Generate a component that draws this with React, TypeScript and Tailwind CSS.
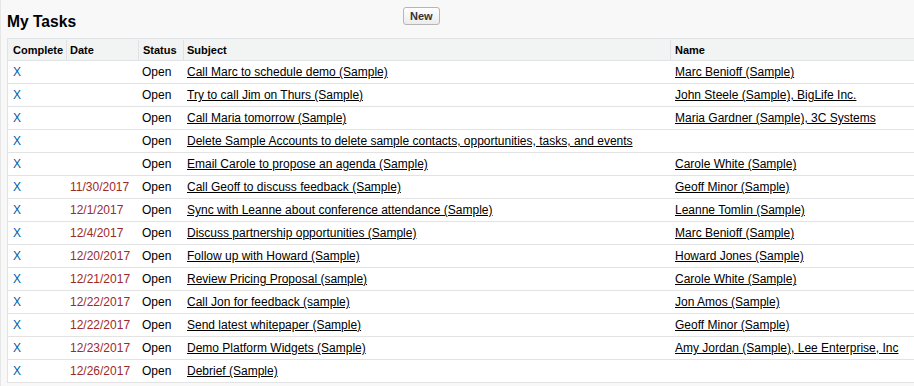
// My Tasks — classic list view of open tasks with due dates and related names.
type Task = { date: string; subject: string; name: string };

const tasks: Task[] = [
  { date: '', subject: 'Call Marc to schedule demo (Sample)', name: 'Marc Benioff (Sample)' },
  { date: '', subject: 'Try to call Jim on Thurs (Sample)', name: 'John Steele (Sample), BigLife Inc.' },
  { date: '', subject: 'Call Maria tomorrow (Sample)', name: 'Maria Gardner (Sample), 3C Systems' },
  {
    date: '',
    subject: 'Delete Sample Accounts to delete sample contacts, opportunities, tasks, and events',
    name: '',
  },
  { date: '', subject: 'Email Carole to propose an agenda (Sample)', name: 'Carole White (Sample)' },
  { date: '11/30/2017', subject: 'Call Geoff to discuss feedback (Sample)', name: 'Geoff Minor (Sample)' },
  {
    date: '12/1/2017',
    subject: 'Sync with Leanne about conference attendance (Sample)',
    name: 'Leanne Tomlin (Sample)',
  },
  { date: '12/4/2017', subject: 'Discuss partnership opportunities (Sample)', name: 'Marc Benioff (Sample)' },
  { date: '12/20/2017', subject: 'Follow up with Howard (Sample)', name: 'Howard Jones (Sample)' },
  { date: '12/21/2017', subject: 'Review Pricing Proposal (sample)', name: 'Carole White (Sample)' },
  { date: '12/22/2017', subject: 'Call Jon for feedback (sample)', name: 'Jon Amos (Sample)' },
  { date: '12/22/2017', subject: 'Send latest whitepaper (Sample)', name: 'Geoff Minor (Sample)' },
  {
    date: '12/23/2017',
    subject: 'Demo Platform Widgets (Sample)',
    name: 'Amy Jordan (Sample), Lee Enterprise, Inc',
  },
  { date: '12/26/2017', subject: 'Debrief (Sample)', name: '' },
];

const cols = 'grid grid-cols-[58px_72px_45px_487px_1fr]';

export default function App() {
  return (
    <div className="h-[386px] w-[914px] overflow-hidden border-l border-[#e6e6e6] bg-[#f8f8f8] font-['Liberation_Sans',Arial,sans-serif] text-[12px] text-black">
      <div className="flex h-[38px] items-start pl-[6px]">
        <h3 className="w-[396px] pt-[13px] text-[15.6px] font-bold leading-[18px]">My Tasks</h3>
        <button className="mt-[7px] h-[18px] rounded-[3px] border border-[#b5b5b5] bg-gradient-to-b from-white to-[#ececec] px-[6px] text-[11px] font-bold leading-[15px] text-[#333]">
          New
        </button>
      </div>

      <div className="ml-[6px] w-[920px] border-l border-t border-[#e0e3e5] bg-white">
        <div className={`${cols} h-[22px] border-b border-[#e0e3e5] bg-[#f2f3f3] pt-px text-[11px] font-bold`}>
          <div className="flex items-center pl-[5px]">Complete</div>
          <div className="flex items-center border-l border-[#e0e3e5] pl-[3px]">Date</div>
          <div className="flex items-center border-l border-[#e0e3e5] pl-[4px]">Status</div>
          <div className="flex items-center border-l border-[#e0e3e5] pl-[3px]">Subject</div>
          <div className="flex items-center border-l border-[#e0e3e5] pl-[4px]">Name</div>
        </div>

        {tasks.map((t, i) => (
          <div key={i} className={`${cols} h-[23px] border-b border-[#e3e3e3]`}>
            <div className="flex items-center pl-[5px] text-[#015ba7]">X</div>
            <div className="flex items-center pl-[4px] text-[#9d2a2a]">{t.date}</div>
            <div className="flex items-center pl-[4px]">Open</div>
            <div className="flex items-center whitespace-nowrap pl-[4px]">
              <span className="underline">{t.subject}</span>
            </div>
            <div className="flex items-center whitespace-nowrap pl-[5px]">
              {t.name && <span className="underline">{t.name}</span>}
            </div>
          </div>
        ))}
      </div>
    </div>
  );
}
